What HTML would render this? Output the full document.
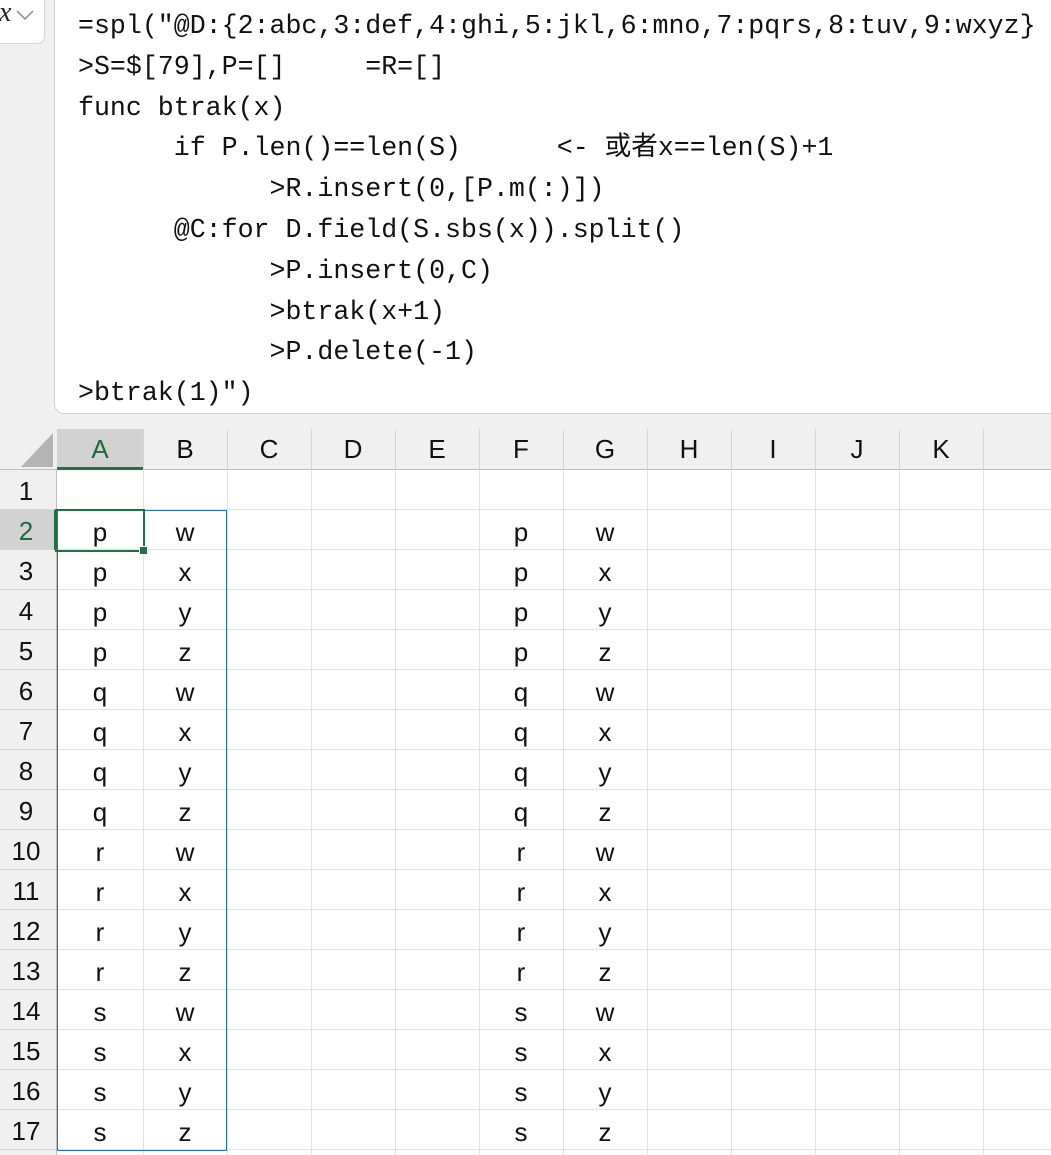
<!DOCTYPE html>
<html><head><meta charset="utf-8">
<style>
html,body{margin:0;padding:0;}
body{width:1051px;height:1155px;position:relative;overflow:hidden;background:#f0f0f0;font-family:"Liberation Sans","Noto Sans CJK SC",sans-serif;}
.abs{position:absolute;}
#fx{left:-8px;top:-8px;width:53px;height:52px;background:#fff;border:1px solid #d6d6d6;border-radius:0 0 8px 0;box-sizing:border-box;}
#fbox{left:54px;top:-10px;width:1010px;height:424px;background:#fff;border:1px solid #d0d0d0;border-radius:0 0 0 10px;box-sizing:border-box;}
#code{left:78px;top:6px;margin:0;font-family:"Liberation Mono","Noto Sans CJK SC",monospace;font-size:26.6px;line-height:40.8px;color:#111;white-space:pre;}
#hdr{left:0;top:414px;width:1051px;height:56px;background:#f0f0f0;border-bottom:1px solid #bdbdbd;box-sizing:border-box;}
.ch{position:absolute;top:429px;height:41px;line-height:41px;text-align:center;font-size:26px;color:#111;}
.vl{position:absolute;width:1px;background:#d4d4d4;}
#grid{left:57px;top:470px;width:994px;height:685px;background:#fff repeating-linear-gradient(to bottom,transparent 0,transparent 39px,#e1e1e1 39px,#e1e1e1 40px);}
#rowh{left:0;top:470px;width:57px;height:685px;background:#f0f0f0 repeating-linear-gradient(to bottom,transparent 0,transparent 39px,#d4d4d4 39px,#d4d4d4 40px);border-right:1px solid #bdbdbd;box-sizing:border-box;}
.rn{position:absolute;left:0;width:52px;height:40px;line-height:42px;text-align:center;font-size:26px;color:#111;}
.c{position:absolute;width:84px;height:40px;line-height:44px;text-align:center;font-size:26px;color:#111;}
</style></head><body>
<div id="fbox" class="abs"></div>
<div id="fx" class="abs"><span class="abs" style="left:6px;top:4px;font-family:'Liberation Serif',serif;font-style:italic;font-size:28px;color:#222;">x</span>
<svg class="abs" style="left:22px;top:16px" width="20" height="12"><path d="M2 2 L10 10 L18 2" fill="none" stroke="#8a8a8a" stroke-width="1.5"/></svg></div>
<pre id="code" class="abs">=spl("@D:{2:abc,3:def,4:ghi,5:jkl,6:mno,7:pqrs,8:tuv,9:wxyz}
&gt;S=$[79],P=[]     =R=[]
func btrak(x)
      if P.len()==len(S)      &lt;- 或者x==len(S)+1
            &gt;R.insert(0,[P.m(:)])
      @C:for D.field(S.sbs(x)).split()
            &gt;P.insert(0,C)
            &gt;btrak(x+1)
            &gt;P.delete(-1)
&gt;btrak(1)")</pre>
<div id="hdr" class="abs"></div>
<svg class="abs" style="left:20px;top:432px" width="34" height="36"><polygon points="33,1 33,35 1,35" fill="#b4b4b4"/></svg>
<div class="abs" style="left:57px;top:429px;width:86px;height:38px;background:#d2d2d2"></div>
<div class="abs" style="left:57px;top:467px;width:86px;height:3px;background:#1f7244"></div>
<div class="vl" style="left:143px;top:429px;height:41px"></div>
<div class="vl" style="left:227px;top:429px;height:41px"></div>
<div class="vl" style="left:311px;top:429px;height:41px"></div>
<div class="vl" style="left:395px;top:429px;height:41px"></div>
<div class="vl" style="left:479px;top:429px;height:41px"></div>
<div class="vl" style="left:563px;top:429px;height:41px"></div>
<div class="vl" style="left:647px;top:429px;height:41px"></div>
<div class="vl" style="left:731px;top:429px;height:41px"></div>
<div class="vl" style="left:815px;top:429px;height:41px"></div>
<div class="vl" style="left:899px;top:429px;height:41px"></div>
<div class="vl" style="left:983px;top:429px;height:41px"></div>
<div class="ch" style="left:57px;width:86px;color:#1f6b3f">A</div>
<div class="ch" style="left:143px;width:84px">B</div>
<div class="ch" style="left:227px;width:84px">C</div>
<div class="ch" style="left:311px;width:84px">D</div>
<div class="ch" style="left:395px;width:84px">E</div>
<div class="ch" style="left:479px;width:84px">F</div>
<div class="ch" style="left:563px;width:84px">G</div>
<div class="ch" style="left:647px;width:84px">H</div>
<div class="ch" style="left:731px;width:84px">I</div>
<div class="ch" style="left:815px;width:84px">J</div>
<div class="ch" style="left:899px;width:84px">K</div>

<div id="grid" class="abs"></div>
<div class="vl" style="left:143px;top:470px;height:685px;background:#e1e1e1"></div>
<div class="vl" style="left:227px;top:470px;height:685px;background:#e1e1e1"></div>
<div class="vl" style="left:311px;top:470px;height:685px;background:#e1e1e1"></div>
<div class="vl" style="left:395px;top:470px;height:685px;background:#e1e1e1"></div>
<div class="vl" style="left:479px;top:470px;height:685px;background:#e1e1e1"></div>
<div class="vl" style="left:563px;top:470px;height:685px;background:#e1e1e1"></div>
<div class="vl" style="left:647px;top:470px;height:685px;background:#e1e1e1"></div>
<div class="vl" style="left:731px;top:470px;height:685px;background:#e1e1e1"></div>
<div class="vl" style="left:815px;top:470px;height:685px;background:#e1e1e1"></div>
<div class="vl" style="left:899px;top:470px;height:685px;background:#e1e1e1"></div>
<div class="vl" style="left:983px;top:470px;height:685px;background:#e1e1e1"></div>

<div id="rowh" class="abs"></div>
<div class="abs" style="left:0;top:510px;width:56px;height:39px;background:#d2d2d2"></div>
<div class="abs" style="left:54px;top:510px;width:3px;height:40px;background:#1f7244"></div>

<div class="abs" style="left:57px;top:510px;width:170px;height:641px;border:1px solid #2a6fd0;box-sizing:border-box"></div>
<div class="abs" style="left:55px;top:509px;width:90px;height:43px;border:2px solid #1f7244;box-sizing:border-box"></div>
<div class="abs" style="left:139px;top:546px;width:7px;height:7px;background:#1f7244;border:1px solid #fff"></div>

<div id="cells">
<div class="rn" style="top:470px">1</div>
<div class="rn" style="top:510px;color:#1f6b3f">2</div>
<div class="rn" style="top:550px">3</div>
<div class="rn" style="top:590px">4</div>
<div class="rn" style="top:630px">5</div>
<div class="rn" style="top:670px">6</div>
<div class="rn" style="top:710px">7</div>
<div class="rn" style="top:750px">8</div>
<div class="rn" style="top:790px">9</div>
<div class="rn" style="top:830px">10</div>
<div class="rn" style="top:870px">11</div>
<div class="rn" style="top:910px">12</div>
<div class="rn" style="top:950px">13</div>
<div class="rn" style="top:990px">14</div>
<div class="rn" style="top:1030px">15</div>
<div class="rn" style="top:1070px">16</div>
<div class="rn" style="top:1110px">17</div>
</div>
<script>
var L="ppppqqqqrrrrssss",R="wxyz";
var h="";
for(var i=0;i<16;i++){var t=510+40*i;var a=L[i],b=R[i%4];
h+='<div class="c" style="left:58px;top:'+t+'px">'+a+'</div>';
h+='<div class="c" style="left:143px;top:'+t+'px">'+b+'</div>';
h+='<div class="c" style="left:479px;top:'+t+'px">'+a+'</div>';
h+='<div class="c" style="left:563px;top:'+t+'px">'+b+'</div>';}
document.getElementById("cells").insertAdjacentHTML("beforeend",h);
</script>
</body></html>
